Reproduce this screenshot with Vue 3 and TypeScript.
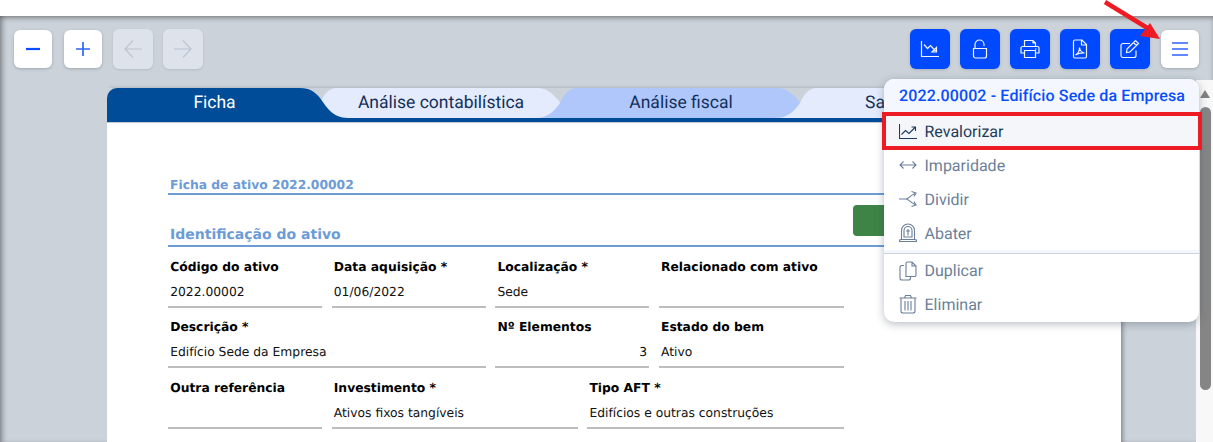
<template>
  <div class="page">
    <div class="topbar"></div>
    <main class="stage">
      <div class="toolbar">
        <div class="toolgroup">
          <button class="tool tool--white">
            <svg viewBox="0 0 20 20"><path class="thick" d="M3 10H17" /></svg>
          </button>
          <button class="tool tool--white">
            <svg viewBox="0 0 20 20"><path d="M3 10H17M10 3V17" /></svg>
          </button>
          <button class="tool tool--off">
            <svg viewBox="0 0 20 20"><path d="M2 10H19M10 1.500L2 10L10 18.500" /></svg>
          </button>
          <button class="tool tool--off">
            <svg viewBox="0 0 20 20"><path d="M1 10H18M10 1.500L18 10L10 18.500" /></svg>
          </button>
        </div>
        <div class="toolgroup">
          <button class="tool tool--blue">
            <svg viewBox="0 0 20 20"><path d="M1.500 2V17.500H19M4 5.500L7.500 9.500L10.500 6.500L15.500 12M16.500 8.500V13H12L16.500 8.500Z" /></svg>
          </button>
          <button class="tool tool--blue">
            <svg viewBox="0 0 20 20"><path d="M5 9V5.500a4.500 4.500 0 0 1 9 0V7M3.500 9.500H16.500V17a2 2 0 0 1-2 2H5.500a2 2 0 0 1-2-2Z" /></svg>
          </button>
          <button class="tool tool--blue">
            <svg viewBox="0 0 20 20"><path d="M4.500 7.500V1.500H13L15.500 4V7.500M13 1.500V4H15.500M2.500 7.500H17.500A1.500 1.500 0 0 1 19 9V14H15.500M4.500 14H1V9A1.500 1.500 0 0 1 2.500 7.500M4.500 11.500H15.500V18.500H4.500ZM15 10H16.500" /></svg>
          </button>
          <button class="tool tool--blue">
            <svg viewBox="0 0 20 20"><path d="M3.500 2.500A1.500 1.500 0 0 1 5 1H12L16.500 5.500V17.500a1.500 1.500 0 0 1-1.500 1.500H5a1.500 1.500 0 0 1-1.500-1.500ZM11.500 1V6H16.500M5.500 16C8 14.500 9.500 11.500 9.500 8.500C10 11.500 12 13.500 14.500 14C12 13.800 8 14.500 5.500 16Z" /></svg>
          </button>
          <button class="tool tool--blue">
            <svg viewBox="0 0 20 20"><path d="M16 11.500V16.500a2 2 0 0 1-2 2H3a2 2 0 0 1-2-2V6.500a2 2 0 0 1 2-2H10M7 10L15.500 1.500L18.500 4.500L10 13L6.500 13.500ZM13.500 3.500L16.500 6.500" /></svg>
          </button>
          <button class="tool tool--white">
            <svg viewBox="0 0 20 20"><path d="M2 4H18M2 10H18M2 16H18" /></svg>
          </button>
        </div>
      </div>

      <section class="sheet">
        <nav class="tabs">
          <div
            v-for="(tab, i) in tabs"
            :key="tab.label"
            class="tab"
            :class="[tab.kind, { 'tab--first': i === 0, 'tab--cut': i === 3 }]"
          >
            <svg class="tab-shape" :viewBox="`0 0 ${i === 0 ? 241 : 287} 30`">
              <path :d="i === 0 ? FIRST_TAB : OTHER_TAB" />
            </svg>
            <span class="tab-label">{{ tab.label }}</span>
          </div>
        </nav>

        <div class="body">
          <h2 class="heading heading--first">Ficha de ativo 2022.00002</h2>
          <div class="actions"><span class="green"></span></div>
          <h2 class="heading heading--second">Identificação do ativo</h2>
          <div v-for="(row, r) in rows" :key="r" class="row" :class="{ 'row--first': r === 0 }">
            <div v-for="field in row" :key="field.label" class="field" :class="field.size">
              <label>{{ field.label }}</label>
              <div class="value" :class="{ 'value--num': field.num }">{{ field.value }}</div>
            </div>
          </div>
        </div>
      </section>
    </main>

    <aside class="scroll">
      <span class="scroll-up"></span>
      <span class="scroll-thumb"></span>
    </aside>

    <div class="menu">
      <div class="menu-title">2022.00002 - Edifício Sede da Empresa</div>
      <div
        v-for="item in menu"
        :key="item.label"
        class="menu-item"
        :class="{ 'menu-item--on': item.on, 'menu-item--split': item.split }"
      >
        <svg viewBox="0 0 18 20"><path :d="item.icon" /></svg>
        <span>{{ item.label }}</span>
      </div>
    </div>

    <!-- anotações do manual -->
    <div class="mark"></div>
    <svg class="arrow" viewBox="0 0 70 45">
      <path class="arrow-line" d="M1 2L45 29" />
      <path class="arrow-head" d="M56 39L36 36L46 23Z" />
    </svg>
  </div>
</template>

<script setup lang="ts">
interface Field {
  label: string;
  value: string;
  size: string;
  num?: boolean;
}

const FIRST_TAB =
  'M0 30V10A10 10 0 0 1 10 0H193C203 0 208 4 213 10C219 18 225 30 241 30Z';
const OTHER_TAB =
  'M0 30C14 30 20 22 25 15C29 7 33 0 42 0H242C252 0 258 6 264 13C269 21 274 30 287 30Z';

const tabs = [
  { label: 'Ficha', kind: 'tab--active' },
  { label: 'Análise contabilística', kind: 'tab--light' },
  { label: 'Análise fiscal', kind: 'tab--mid' },
  // o resto do separador fica tapado pelo menu
  { label: 'Sa', kind: 'tab--light' }
];

const rows: Field[][] = [
  [
    { label: 'Código do ativo', value: '2022.00002', size: 'w-s' },
    { label: 'Data aquisição *', value: '01/06/2022', size: 'w-s' },
    { label: 'Localização *', value: 'Sede', size: 'w-s' },
    { label: 'Relacionado com ativo', value: '', size: 'w-m' }
  ],
  [
    { label: 'Descrição *', value: 'Edifício Sede da Empresa', size: 'w-d' },
    { label: 'Nº Elementos', value: '3', size: 'w-s', num: true },
    { label: 'Estado do bem', value: 'Ativo', size: 'w-m' }
  ],
  [
    { label: 'Outra referência', value: '', size: 'w-s' },
    { label: 'Investimento *', value: 'Ativos fixos tangíveis', size: 'w-i' },
    { label: 'Tipo AFT *', value: 'Edifícios e outras construções', size: 'w-t' }
  ]
];

const menu = [
  {
    label: 'Revalorizar',
    on: true,
    icon: 'M0.500 3V17.500H18M2.500 13.500L6.500 9.500L10 12.500L16 6.500M12.500 6H16.500V10'
  },
  {
    label: 'Imparidade',
    icon: 'M1 10H17M4.500 6.500L1 10L4.500 13.500M13.500 6.500L17 10L13.500 13.500'
  },
  {
    label: 'Dividir',
    icon: 'M0 10H7C9.500 10 11 6.500 16 4.500M7 10C9.500 10 11 13.500 16 15.500M12.500 2.500L17 4L15 7.500M12.500 17.500L17 16L15 12.500'
  },
  {
    label: 'Abater',
    icon: 'M0.500 18.500H17.500V17L15.500 16.500H2.500L0.500 17ZM2.500 16.500V7.500a6.500 6.500 0 0 1 13 0V16.500M5 14V7.500a4 4 0 0 1 8 0V14ZM9 6V12.500M7 8H11'
  },
  {
    label: 'Duplicar',
    split: true,
    icon: 'M7 15.500V2.500A1.500 1.500 0 0 1 8.500 1H13L17 5V14A1.500 1.500 0 0 1 15.500 15.500ZM13 1V5H17M5 4.500H3A2 2 0 0 0 1 6.500V17A2 2 0 0 0 3 19H9.500A2 2 0 0 0 11.500 17V15.500'
  },
  {
    label: 'Eliminar',
    icon: 'M0.500 4H17.500M5.500 4L6.500 1.500H11.500L12.500 4M2 4V17A2 2 0 0 0 4 19H14A2 2 0 0 0 16 17V4M6 7V16.500M9 7V16.500M12 7V16.500'
  }
];
</script>

<style>
html,
body {
  margin: 0;
  overflow: hidden;
}
</style>

<style scoped>
.page {
  position: relative;
  display: flex;
  flex-direction: column;
  width: 1213px;
  height: 442px;
  overflow: hidden;
  background: #fff;
  font-family: Roboto, sans-serif;
  text-rendering: geometricPrecision;
}

.topbar {
  height: 16px;
  flex: none;
}

.stage {
  flex: 1;
  background: #cbd2d9;
  box-shadow: inset 0 3px 5px -1px rgba(0, 0, 0, 0.35), inset 5px 0 5px -2px rgba(0, 0, 0, 0.25);
  overflow: hidden;
}

.toolbar {
  display: flex;
  justify-content: space-between;
  height: 40px;
  padding: 13px 13px 19px;
}

.toolgroup {
  display: flex;
  gap: 10px;
}

.tool {
  display: flex;
  align-items: center;
  justify-content: center;
  width: 40px;
  height: 40px;
  padding: 0;
  border: 0;
  border-radius: 6px;
}

.tool svg {
  width: 20px;
  height: 20px;
  fill: none;
  stroke: currentColor;
  stroke-width: 1.2;
}

.tool--white {
  width: 38px;
  height: 38px;
  margin: 1px;
  background: #fff;
  color: #2f63fb;
  box-shadow: 0 1px 3px rgba(60, 70, 90, 0.3);
}

.tool--white svg {
  stroke-width: 1.7;
}

.tool--white svg .thick {
  stroke: #0a4dff;
  stroke-width: 2.2;
}

.tool--off {
  background: #dee3eb;
  color: #bcc4d1;
  box-shadow: 0 1px 2px rgba(60, 70, 90, 0.15);
}

.tool--blue {
  background: #0049ff;
  color: #f2f5ff;
  box-shadow: 0 1px 3px rgba(60, 70, 90, 0.25);
}

.sheet {
  width: 1014px;
  margin-left: 107px;
  height: 400px;
  box-shadow: 3px 0 4px -1px rgba(50, 55, 65, 0.45);
}

.tabs {
  display: flex;
  height: 30px;
  border-bottom: 4px solid #004c99;
  overflow: hidden;
}

.tab {
  position: relative;
  flex: none;
  box-sizing: border-box;
  display: flex;
  align-items: center;
  justify-content: center;
  width: 287px;
  height: 30px;
  margin-left: -47px;
  padding-left: 5px;
  font-size: 17.500px;
  color: #12305a;
}

.tab--first {
  width: 241px;
  margin-left: 0;
  margin-right: -6px;
  padding-left: 0;
  padding-right: 26px;
}

.tab--cut {
  justify-content: flex-start;
  padding-left: 90px;
}

.tab-shape {
  position: absolute;
  left: 0;
  top: 0;
  width: 100%;
  height: 100%;
}

.tab-label {
  position: relative;
}

.tab--active {
  z-index: 2;
  color: #fff;
  fill: #004c99;
}

.tab--light {
  fill: #e4ebfc;
}

.tab--mid {
  fill: #b0c7fb;
}

.body {
  height: 320px;
  padding: 0 61px;
  background: #fff;
  border-top: 1px solid #c4c8cf;
  font-family: 'DejaVu Sans', sans-serif;
  color: #000;
}

.heading {
  margin: 0;
  border-bottom: 2px solid #6c9bd6;
  padding-left: 2px;
  font-weight: 700;
  color: #6c9bd6;
}

.heading--first {
  margin-top: 53px;
  height: 17px;
  line-height: 19px;
  font-size: 12.320px;
}

.actions {
  display: flex;
  justify-content: flex-end;
  height: 31px;
  margin: 10px 0 -10px;
}

.green {
  width: 207px;
  background: #3f8447;
  border-radius: 4px;
}

.heading--second {
  height: 19px;
  line-height: 19px;
  font-size: 14px;
}

.row {
  display: flex;
  gap: 9.600px;
  height: 61px;
}

.row--first {
  margin-bottom: -1px;
}

.field {
  box-sizing: border-box;
  height: 61px;
  padding: 12px 2.200px 0;
  border-bottom: 2px solid #bdbdbd;
}

.w-s {
  width: 154px;
}

.w-m {
  width: 185px;
}

.w-d {
  width: 317.600px;
}

.w-i {
  width: 246px;
}

.w-t {
  width: 256.600px;
}

label {
  display: block;
  height: 16px;
  line-height: 16px;
  font-size: 12.320px;
  font-weight: 700;
}

.value {
  height: 18px;
  margin-top: 8px;
  line-height: 18px;
  font-size: 12.320px;
  color: #111;
}

.value--num {
  text-align: right;
}

.scroll {
  position: absolute;
  top: 80px;
  right: 0;
  bottom: 0;
  width: 17px;
  background: #f8f8f8;
}

.scroll-up {
  position: absolute;
  top: 10px;
  left: 4px;
  border: 5.500px solid transparent;
  border-top: 0;
  border-bottom: 8px solid #808080;
}

.scroll-thumb {
  position: absolute;
  top: 27px;
  left: 4px;
  width: 11px;
  height: 283px;
  border-radius: 6px;
  background: #858585;
}

.menu {
  position: absolute;
  left: 884px;
  top: 79px;
  width: 315px;
  height: 243px;
  border-radius: 10px;
  background: #fff;
  overflow: hidden;
  box-shadow: 0 2px 8px rgba(50, 60, 80, 0.35);
  font-size: 16px;
  color: #6b7f99;
}

.menu-title {
  height: 35px;
  padding-left: 15px;
  background: #f4f8fe;
  line-height: 34px;
  font-weight: 500;
  letter-spacing: 0.130px;
  color: #0a4dff;
  white-space: nowrap;
}

.menu-item {
  display: flex;
  align-items: center;
  gap: 7.500px;
  height: 34px;
  padding-left: 15px;
}

.menu-item svg {
  width: 18px;
  height: 20px;
  flex: none;
  fill: none;
  stroke: currentColor;
  stroke-width: 1.1;
}

.menu-item--on {
  background: #f4f6f9;
  color: #1d3b5c;
}

.menu-item--split {
  height: 33px;
  border-top: 1px solid #cdd4e0;
  margin-top: 3px;
  box-shadow: 0 -3px 0 #f4f8fe;
}

.mark {
  position: absolute;
  left: 882px;
  top: 112px;
  width: 312px;
  height: 30px;
  border: 4px solid #ed1c24;
}

.arrow {
  position: absolute;
  left: 1104px;
  top: 0;
  width: 70px;
  height: 45px;
  overflow: visible;
}

.arrow-line {
  fill: none;
  stroke: #ed1c24;
  stroke-width: 4.500;
}

.arrow-head {
  fill: #ed1c24;
}
</style>
